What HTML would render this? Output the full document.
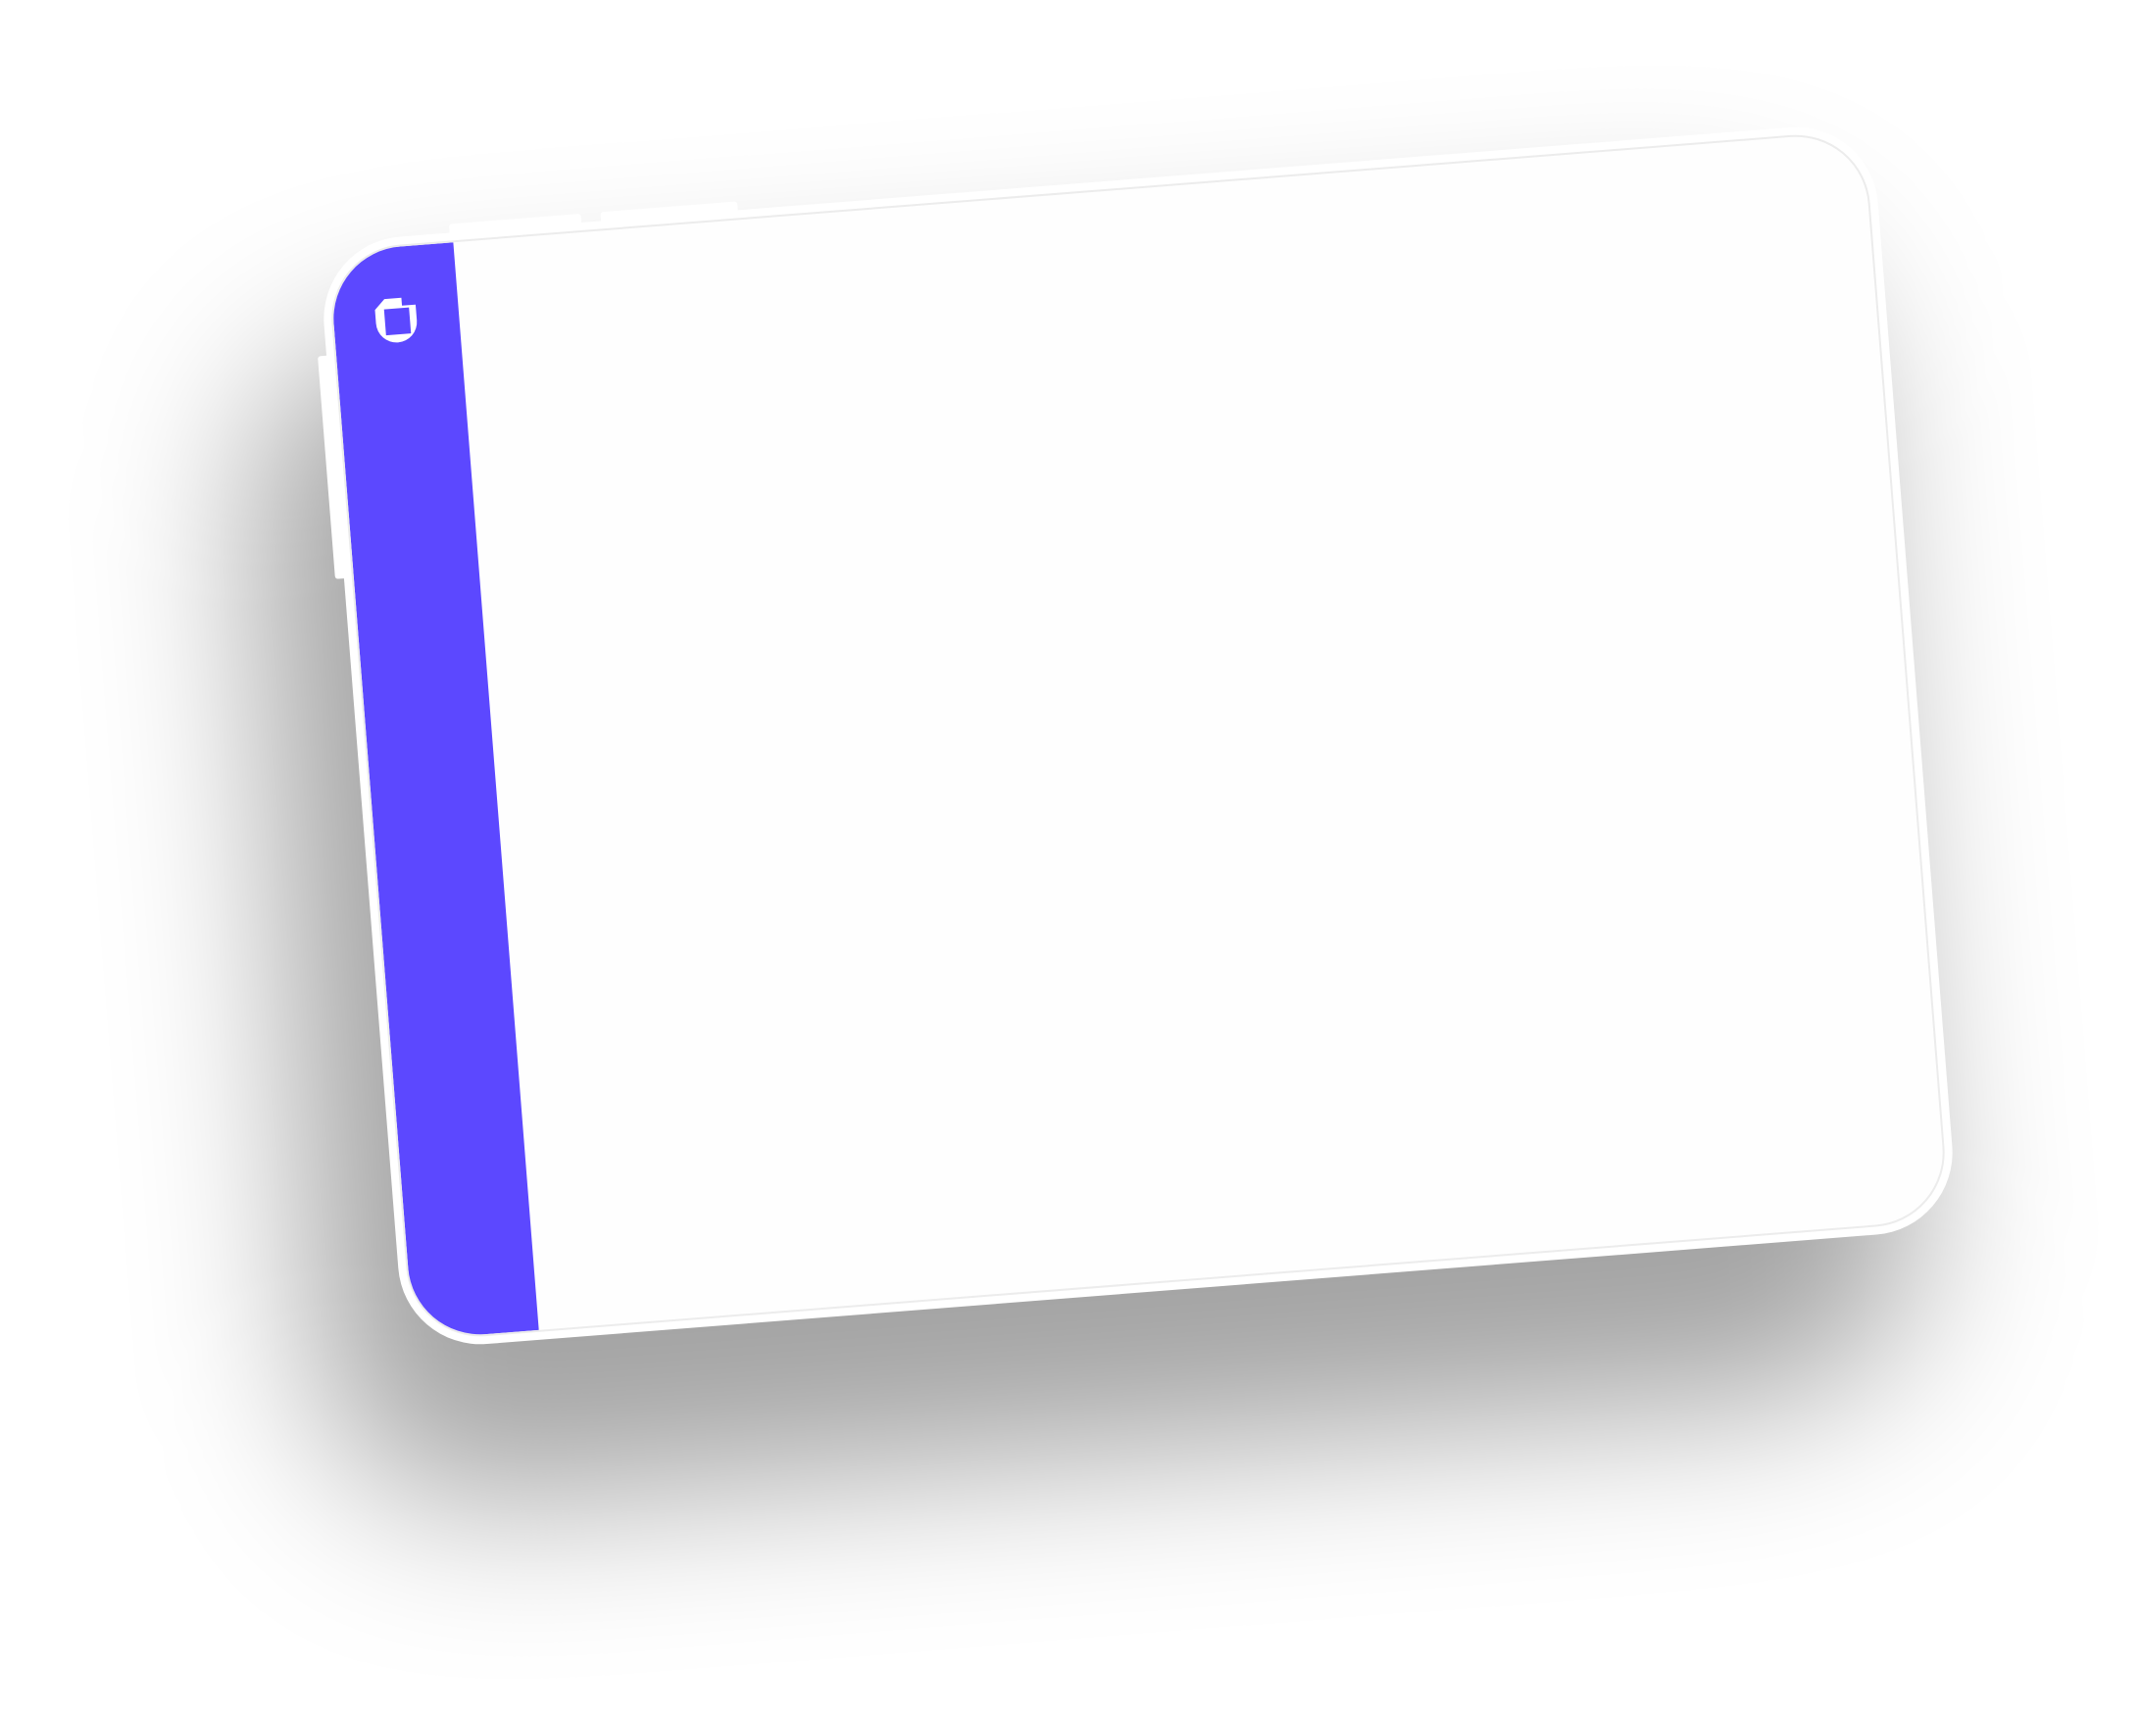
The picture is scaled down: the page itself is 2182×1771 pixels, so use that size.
<!DOCTYPE html>
<html><head><style>
html,body{margin:0;padding:0;width:2182px;height:1771px;overflow:hidden;background:#fff;}
.sh{position:absolute;left:290px;top:300px;width:1630px;height:1180px;transform:rotate(-4.5deg);background:rgba(0,0,0,0.36);border-radius:160px;filter:blur(85px);}
.dev{position:absolute;left:366px;top:184px;width:1590px;height:1133px;transform:rotate(-4.5deg);transform-origin:50% 50%;border-radius:84px;background:#fff;}
.inner{position:absolute;left:8px;top:8px;right:8px;bottom:8px;border-radius:76px;border:2px solid #ececec;overflow:hidden;background:#fefefe;}
.side{position:absolute;left:0;top:0;bottom:0;width:128px;background:#5c48ff;}
.btn{position:absolute;background:#fff;border-radius:3px;}
</style></head><body>
<div class="sh"></div>
<div class="dev">
  <div class="btn" style="left:135px;top:-9px;width:135px;height:12px"></div>
  <div class="btn" style="left:290px;top:-9px;width:140px;height:12px"></div>
  <div class="btn" style="left:-9px;top:115px;width:12px;height:228px"></div>
  <div class="inner">
    <div class="side"></div>
    <svg style="position:absolute;left:36px;top:44px" width="58" height="58" viewBox="0 0 50 50">
      <path d="M6 16 L15 7 L30 7 L30 14 L42 14 L42 28 A18 18 0 0 1 6 28 Z" fill="#fff"/>
      <rect x="14" y="16" width="22" height="23" fill="#5c48ff"/>
    </svg>
  </div>
</div>
</body></html>
